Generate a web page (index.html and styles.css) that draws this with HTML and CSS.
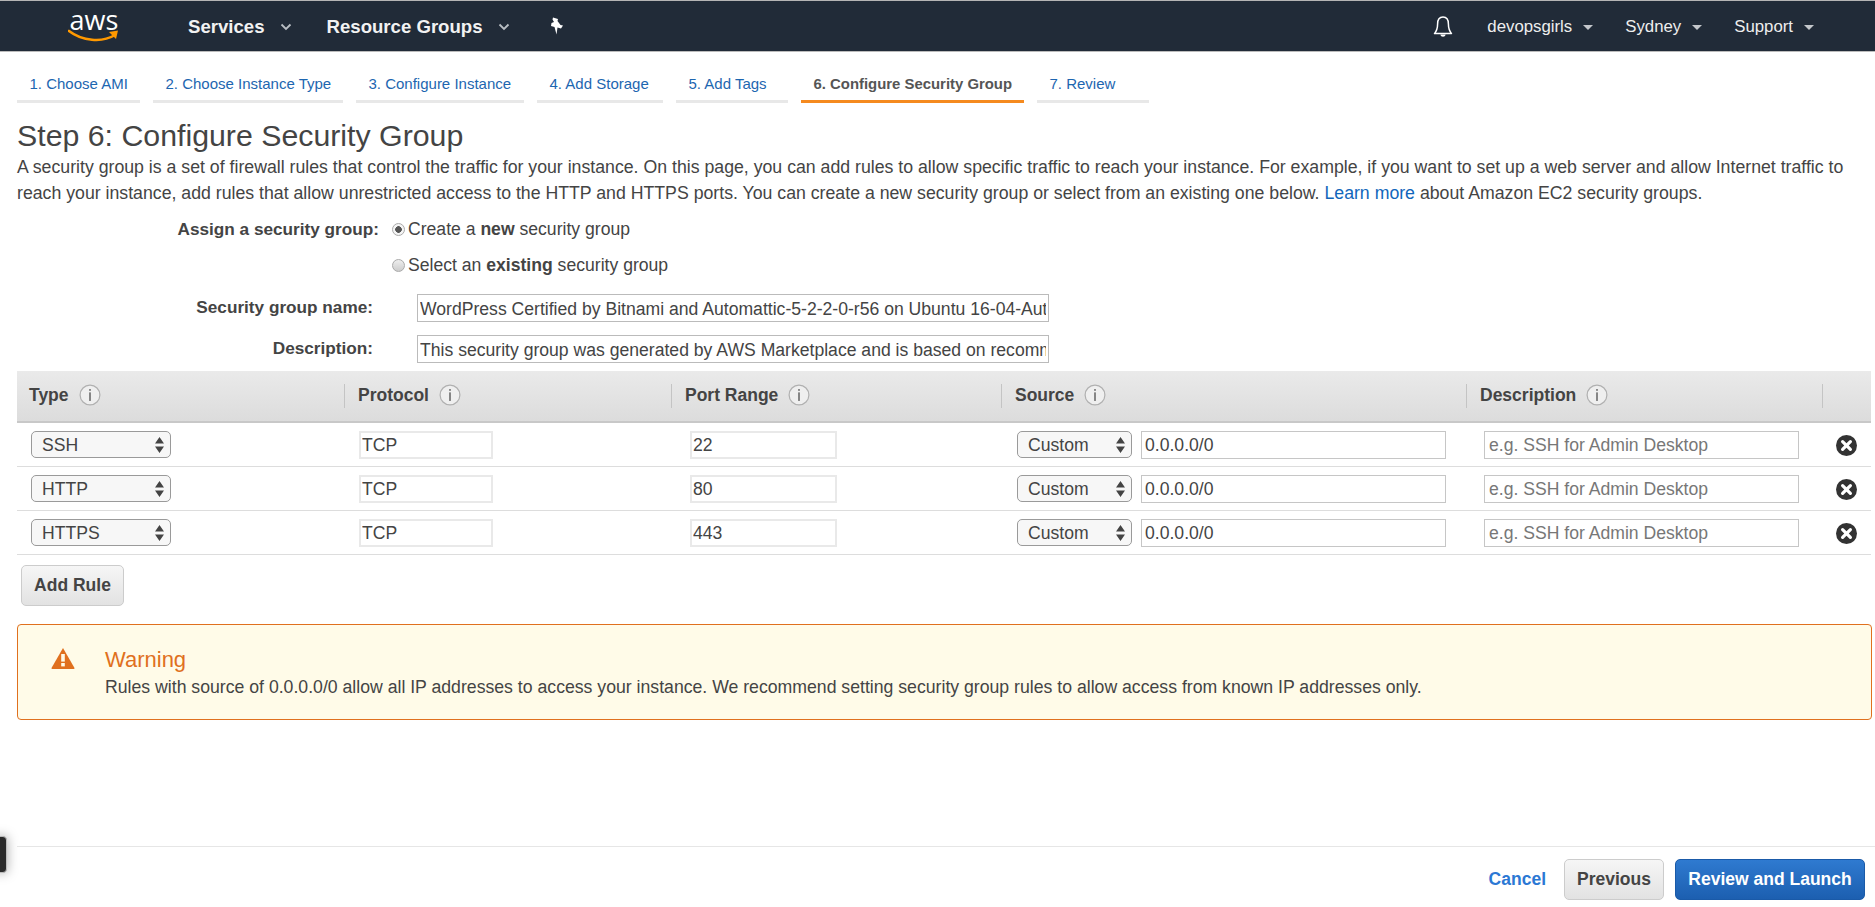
FILE: index.html
```html
<!DOCTYPE html>
<html lang="en">
<head>
  <meta charset="UTF-8" />
  <title>Launch instance wizard</title>
  <link rel="stylesheet" href="styles.css">
</head>
<body>
  <nav class="topnav">
    <div class="logo">
      <span class="logo-text">aws</span>
      <svg class="logo-smile" width="52" height="14" viewBox="0 0 52 14">
        <path d="M1 2 C 14 12, 34 14, 47 6" fill="none" stroke="#f90" stroke-width="2.6" stroke-linecap="round"/>
        <path d="M41 3 L50 1.5 L48 10 Z" fill="#f90"/>
      </svg>
    </div>
    <a class="nav-main nav-services">Services</a>
    <svg class="chev" width="12" height="8" viewBox="0 0 12 8"><path d="M1.5 1.5 L6 6 L10.5 1.5" fill="none" stroke="#b9bec4" stroke-width="1.8"/></svg>
    <a class="nav-main nav-groups">Resource Groups</a>
    <svg class="chev" width="12" height="8" viewBox="0 0 12 8"><path d="M1.5 1.5 L6 6 L10.5 1.5" fill="none" stroke="#b9bec4" stroke-width="1.8"/></svg>
    <svg class="pin" width="16" height="18" viewBox="0 0 16 18"><path d="M5 0.5 L10 2 L9.5 4 L12.5 8 L15 8.5 L13 11.5 L9.5 10.5 L8.5 17.5 L6.5 10 L3 9 L3.5 6 L6 5 L4.5 2.5 Z" fill="#fff"/></svg>
    <div class="nav-right">
      <svg class="bell" width="20" height="24" viewBox="0 0 20 24">
        <path d="M10 2 C5.8 2 4.6 5.4 4.6 9 C4.6 13 3.6 16 1.5 18.6 L18.5 18.6 C16.4 16 15.4 13 15.4 9 C15.4 5.4 14.2 2 10 2 Z" fill="none" stroke="#fff" stroke-width="1.5" stroke-linejoin="round"/>
        <path d="M7.4 19.5 C7.8 22.4 12.2 22.4 12.6 19.5 Z" fill="#fff"/>
      </svg>
      <a class="nav-sub nav-user">devopsgirls</a><span class="caret"></span>
      <a class="nav-sub nav-region">Sydney</a><span class="caret"></span>
      <a class="nav-sub nav-support">Support</a><span class="caret"></span>
    </div>
  </nav>

  <ul class="steps">
    <li class="step">1. Choose AMI</li>
    <li class="step">2. Choose Instance Type</li>
    <li class="step">3. Configure Instance</li>
    <li class="step">4. Add Storage</li>
    <li class="step">5. Add Tags</li>
    <li class="step active">6. Configure Security Group</li>
    <li class="step">7. Review</li>
  </ul>

  <main class="content">
    <h1>Step 6: Configure Security Group</h1>
    <p class="intro">A security group is a set of firewall rules that control the traffic for your instance. On this page, you can add rules to allow specific traffic to reach your instance. For example, if you want to set up a web server and allow Internet traffic to reach your instance, add rules that allow unrestricted access to the HTTP and HTTPS ports. You can create a new security group or select from an existing one below. <a class="link">Learn more</a> about Amazon EC2 security groups.</p>

    <div class="radio-row">
      <span class="radio-label">Assign a security group:</span>
      <span class="radio on"></span>
      <span>Create a <b>new</b> security group</span>
    </div>
    <div class="radio-row">
      <span class="radio-label"></span>
      <span class="radio"></span>
      <span>Select an <b>existing</b> security group</span>
    </div>
    <div class="field-row first">
      <label class="field-label">Security group name:</label>
      <input class="field-input" type="text" value="WordPress Certified by Bitnami and Automattic-5-2-2-0-r56 on Ubuntu 16-04-AutogenByAWSMP-">
    </div>
    <div class="field-row">
      <label class="field-label">Description:</label>
      <input class="field-input" type="text" value="This security group was generated by AWS Marketplace and is based on recommended settings for WordPress">
    </div>

    <table class="rules">
      <colgroup>
        <col class="col-type"><col class="col-proto"><col class="col-port"><col class="col-source"><col class="col-desc"><col class="col-del">
      </colgroup>
      <thead>
        <tr>
          <th><div class="th-in no-sep">Type <svg class="info" width="22" height="22" viewBox="0 0 20 20"><use href="#info"/></svg></div></th>
          <th><div class="th-in">Protocol <svg class="info" width="22" height="22" viewBox="0 0 20 20"><use href="#info"/></svg></div></th>
          <th><div class="th-in">Port Range <svg class="info" width="22" height="22" viewBox="0 0 20 20"><use href="#info"/></svg></div></th>
          <th><div class="th-in">Source <svg class="info" width="22" height="22" viewBox="0 0 20 20"><use href="#info"/></svg></div></th>
          <th><div class="th-in">Description <svg class="info" width="22" height="22" viewBox="0 0 20 20"><use href="#info"/></svg></div></th>
          <th><div class="th-in"></div></th>
        </tr>
      </thead>
      <tbody>
        <tr>
          <td class="td-type"><select class="sel sel-type"><option>SSH</option></select></td>
          <td class="td-proto"><input class="inp inp-ro inp-proto" type="text" value="TCP"></td>
          <td class="td-port"><input class="inp inp-ro inp-port" type="text" value="22"></td>
          <td class="td-source"><select class="sel sel-source"><option>Custom</option></select><input class="inp inp-cidr" type="text" value="0.0.0.0/0"></td>
          <td class="td-desc"><input class="inp inp-desc" type="text" placeholder="e.g. SSH for Admin Desktop"></td>
          <td class="td-del"><svg width="23" height="23" viewBox="0 0 23 23"><use href="#remove"/></svg></td>
        </tr>
        <tr>
          <td class="td-type"><select class="sel sel-type"><option>HTTP</option></select></td>
          <td class="td-proto"><input class="inp inp-ro inp-proto" type="text" value="TCP"></td>
          <td class="td-port"><input class="inp inp-ro inp-port" type="text" value="80"></td>
          <td class="td-source"><select class="sel sel-source"><option>Custom</option></select><input class="inp inp-cidr" type="text" value="0.0.0.0/0"></td>
          <td class="td-desc"><input class="inp inp-desc" type="text" placeholder="e.g. SSH for Admin Desktop"></td>
          <td class="td-del"><svg width="23" height="23" viewBox="0 0 23 23"><use href="#remove"/></svg></td>
        </tr>
        <tr>
          <td class="td-type"><select class="sel sel-type"><option>HTTPS</option></select></td>
          <td class="td-proto"><input class="inp inp-ro inp-proto" type="text" value="TCP"></td>
          <td class="td-port"><input class="inp inp-ro inp-port" type="text" value="443"></td>
          <td class="td-source"><select class="sel sel-source"><option>Custom</option></select><input class="inp inp-cidr" type="text" value="0.0.0.0/0"></td>
          <td class="td-desc"><input class="inp inp-desc" type="text" placeholder="e.g. SSH for Admin Desktop"></td>
          <td class="td-del"><svg width="23" height="23" viewBox="0 0 23 23"><use href="#remove"/></svg></td>
        </tr>
      </tbody>
    </table>

    <button class="btn add-rule">Add Rule</button>

    <div class="warning">
      <svg class="warn-icon" width="24" height="22" viewBox="0 0 24 22">
        <path d="M12 1 L23.5 21 Q23.8 22 22.6 22 L1.4 22 Q0.2 22 0.5 21 Z" fill="#e0701e"/>
        <rect x="10.2" y="7" width="3.6" height="7.6" fill="#fffbe8"/>
        <rect x="10.2" y="16" width="3.6" height="3.4" fill="#fffbe8"/>
      </svg>
      <div>
        <div class="warn-title">Warning</div>
        <div class="warn-text">Rules with source of 0.0.0.0/0 allow all IP addresses to access your instance. We recommend setting security group rules to allow access from known IP addresses only.</div>
      </div>
    </div>
  </main>

  <footer class="footer">
    <a class="cancel">Cancel</a>
    <button class="btn prev">Previous</button>
    <button class="btn primary">Review and Launch</button>
  </footer>

  <div class="side-handle"></div>

  <svg class="defs" width="0" height="0">
    <defs>
      <g id="info">
        <circle cx="10" cy="10" r="9" fill="#efefef" stroke="#b0b0b0" stroke-width="1.1"/>
        <rect x="9.3" y="4.6" width="1.4" height="1.6" fill="#666"/>
        <rect x="9.3" y="7.6" width="1.4" height="7.8" fill="#666"/>
      </g>
      <g id="remove">
        <circle cx="11.5" cy="11.5" r="10.5" fill="#333"/>
        <path d="M7.6 7.6 L15.4 15.4 M15.4 7.6 L7.6 15.4" stroke="#fff" stroke-width="3.2" stroke-linecap="round"/>
      </g>
    </defs>
  </svg>
</body>
</html>
```

FILE: styles.css
```css
html, body {
  margin: 0;
  padding: 0;
  height: 100%;
}
body {
  display: flex;
  flex-direction: column;
  font-family: "Liberation Sans", Arial, sans-serif;
  font-size: 17.6px;
  color: #444;
  background: #fff;
  overflow: hidden;
}
a {
  cursor: pointer;
}

/* top bar */
.topnav {
  display: flex;
  align-items: center;
  height: 50px;
  flex: none;
  background: #212b38;
  border-top: 1px solid #b5b5b5;
  border-bottom: 1px solid #bcbcbc;
  color: #fff;
}
.logo {
  width: 52px;
  height: 34px;
  margin-left: 68px;
  position: relative;
}
.logo-text {
  display: block;
  font-family: "Open Sans", sans-serif;
  font-size: 27px;
  line-height: 22px;
  text-align: center;
}
.logo-smile {
  position: absolute;
  left: 0;
  top: 20px;
}
.nav-main {
  padding-top: 2px;
  font-size: 18.6px;
  font-weight: bold;
  color: #f2f2f2;
}
.nav-services {
  margin-left: 68px;
}
.nav-groups {
  margin-left: 35px;
}
.chev {
  margin-left: 15px;
  margin-top: 2px;
}
.pin {
  margin-left: 38px;
}
.nav-right {
  display: flex;
  align-items: center;
  margin-left: auto;
  margin-right: 61px;
  padding-top: 2px;
}
.bell {
  margin-right: 34px;
}
.nav-sub {
  font-size: 16.8px;
  color: #eee;
}
.nav-region,
.nav-support {
  margin-left: 32px;
}
.caret {
  width: 0;
  height: 0;
  margin-left: 11px;
  border-left: 5px solid transparent;
  border-right: 5px solid transparent;
  border-top: 5px solid #c4c7cb;
}

/* wizard steps */
.steps {
  display: flex;
  gap: 13px;
  flex: none;
  list-style: none;
  margin: 18px 0 0 17px;
  padding: 0;
}
.step {
  box-sizing: border-box;
  padding: 0 0 2px 12.5px;
  line-height: 28px;
  font-size: 15px;
  color: #1d66b0;
  border-bottom: 3px solid #e8e8e8;
}
.step:nth-child(1) { width: 123px; }
.step:nth-child(2) { width: 190px; }
.step:nth-child(3) { width: 168px; }
.step:nth-child(4) { width: 126px; }
.step:nth-child(5) { width: 112px; }
.step:nth-child(6) { width: 223px; }
.step:nth-child(7) { width: 112px; }
.step.active {
  font-size: 14.9px;
  font-weight: bold;
  color: #555;
  border-bottom-color: #f58a1f;
}

/* main form */
.content {
  flex: 1;
  padding: 0 4px 0 17px;
}
h1 {
  margin: 15px 0 0;
  font-size: 30.3px;
  font-weight: normal;
  line-height: 36px;
  color: #444;
}
.intro {
  margin: 0;
  font-size: 17.72px;
  line-height: 26px;
}
.link {
  color: #1166bb;
}
.radio-row {
  display: flex;
  align-items: center;
  height: 36px;
}
.radio-row:first-of-type {
  margin-top: 5px;
}
.radio-label {
  width: 362px;
  margin-right: 13px;
  font-size: 17.2px;
  font-weight: bold;
  text-align: right;
}
.radio {
  box-sizing: border-box;
  width: 13px;
  height: 13px;
  margin-right: 3px;
  border: 1px solid #aaa;
  border-radius: 50%;
  background: linear-gradient(#eee, #ccc);
}
.radio.on {
  background: radial-gradient(circle, #555 0 3px, #f4f4f4 3.6px);
}
.field-row {
  display: flex;
  align-items: center;
  margin-top: 13px;
}
.field-row.first {
  margin-top: 11px;
}
.field-label {
  width: 356px;
  margin-right: 44px;
  padding-bottom: 2px;
  font-size: 17.2px;
  font-weight: bold;
  text-align: right;
}
.field-input {
  box-sizing: border-box;
  width: 632px;
  height: 28px;
  padding: 2px 2px 0;
  border: 1px solid #bbb;
  font: inherit;
  color: #444;
}

/* rules table */
.rules {
  table-layout: fixed;
  width: 1854px;
  margin-top: 8px;
  border-collapse: separate;
  border-spacing: 0;
}
.col-type, .col-proto { width: 327px; }
.col-port { width: 330px; }
.col-source { width: 465px; }
.col-desc { width: 356px; }
.col-del { width: 49px; }
.rules th {
  height: 52px;
  box-sizing: border-box;
  padding: 0;
  background: linear-gradient(#eaeaea, #dcdcdc);
  border-bottom: 2px solid #c8c8c8;
  text-align: left;
}
.th-in {
  box-sizing: border-box;
  display: flex;
  align-items: center;
  height: 24px;
  padding: 0 0 2px 13px;
  border-left: 1px solid #c4c4c4;
  font-size: 17.5px;
  font-weight: bold;
  color: #444;
}
.th-in.no-sep {
  padding-left: 12px;
  border-left: none;
}
.info {
  margin-left: 10px;
}
.rules td {
  height: 44px;
  box-sizing: border-box;
  padding: 0;
  border-bottom: 1px solid #ddd;
}
.td-type { padding-left: 14px !important; }
.td-proto { padding-left: 15px !important; }
.td-port { padding-left: 19px !important; }
.td-source { padding-left: 16px !important; }
.td-desc { padding-left: 18px !important; }
.td-del { text-align: center; }
.td-del svg { display: block; margin: 2px auto 0; }
.inp {
  box-sizing: border-box;
  height: 28px;
  padding: 2px 3px 0;
  border: 1px solid #c6c6c6;
  font: inherit;
  color: #444;
  vertical-align: middle;
}
.inp::placeholder {
  color: #777;
  opacity: 1;
}
.inp-ro {
  border: 2px solid #e9e9e9;
  padding: 2px 1px 0;
}
.inp-proto { width: 134px; }
.inp-port { width: 147px; }
.inp-cidr { width: 305px; margin-left: 9px; }
.inp-desc { width: 315px; padding: 2px 4px 0; }
.sel {
  box-sizing: border-box;
  height: 27px;
  padding: 1px 0 0 10px;
  border: 1px solid #9a9a9a;
  border-radius: 5px;
  font: inherit;
  color: #444;
  appearance: none;
  vertical-align: middle;
  background: #f7f7f7 url("data:image/svg+xml;utf8,<svg xmlns='http://www.w3.org/2000/svg' width='9' height='16'><path d='M4.5 0 L9 6.5 L0 6.5 Z M4.5 16 L9 9.5 L0 9.5 Z' fill='%23444'/></svg>") no-repeat right 6px center;
}
.sel-type { width: 140px; }
.sel-source { width: 115px; }

/* buttons */
.btn {
  box-sizing: border-box;
  height: 41px;
  border: 1px solid #ccc;
  border-radius: 5px;
  background: linear-gradient(#f6f6f6, #e2e2e2);
  font: inherit;
  font-size: 17.5px;
  font-weight: bold;
  color: #444;
  cursor: pointer;
}
.add-rule {
  display: block;
  width: 103px;
  margin: 10px 0 0 4px;
}

.warning {
  box-sizing: border-box;
  display: flex;
  width: 1855px;
  height: 96px;
  margin-top: 18px;
  padding: 22px 0 0 33px;
  background: #fffbe8;
  border: 1px solid #e0701e;
  border-radius: 4px;
}
.warn-icon {
  flex: none;
  margin-right: 30px;
}
.warn-title {
  font-size: 22px;
  line-height: 25px;
  color: #e0701e;
}
.warn-text {
  margin-top: 3px;
  font-size: 17.66px;
  line-height: 24px;
}

/* footer */
.footer {
  display: flex;
  align-items: center;
  flex: none;
  height: 55px;
  margin-left: 17px;
  padding: 5px 10px 0 0;
  border-top: 1px solid #e6e6e6;
  justify-content: flex-end;
}
.cancel {
  margin-right: 18px;
  font-size: 17.5px;
  font-weight: bold;
  color: #2b78d4;
}
.prev {
  width: 100px;
  margin-right: 11px;
}
.primary {
  width: 190px;
  border-color: #1a5aa8;
  background: linear-gradient(#2f7ad0, #1c5fb0);
  color: #fff;
}

.side-handle {
  position: absolute;
  left: -6px;
  top: 836px;
  width: 11px;
  height: 35px;
  background: #2a2a2a;
  border: 1px solid #bbb;
  border-radius: 4px;
  box-shadow: 0 0 12px rgba(0,0,0,0.35);
}
.defs {
  position: absolute;
}
```
